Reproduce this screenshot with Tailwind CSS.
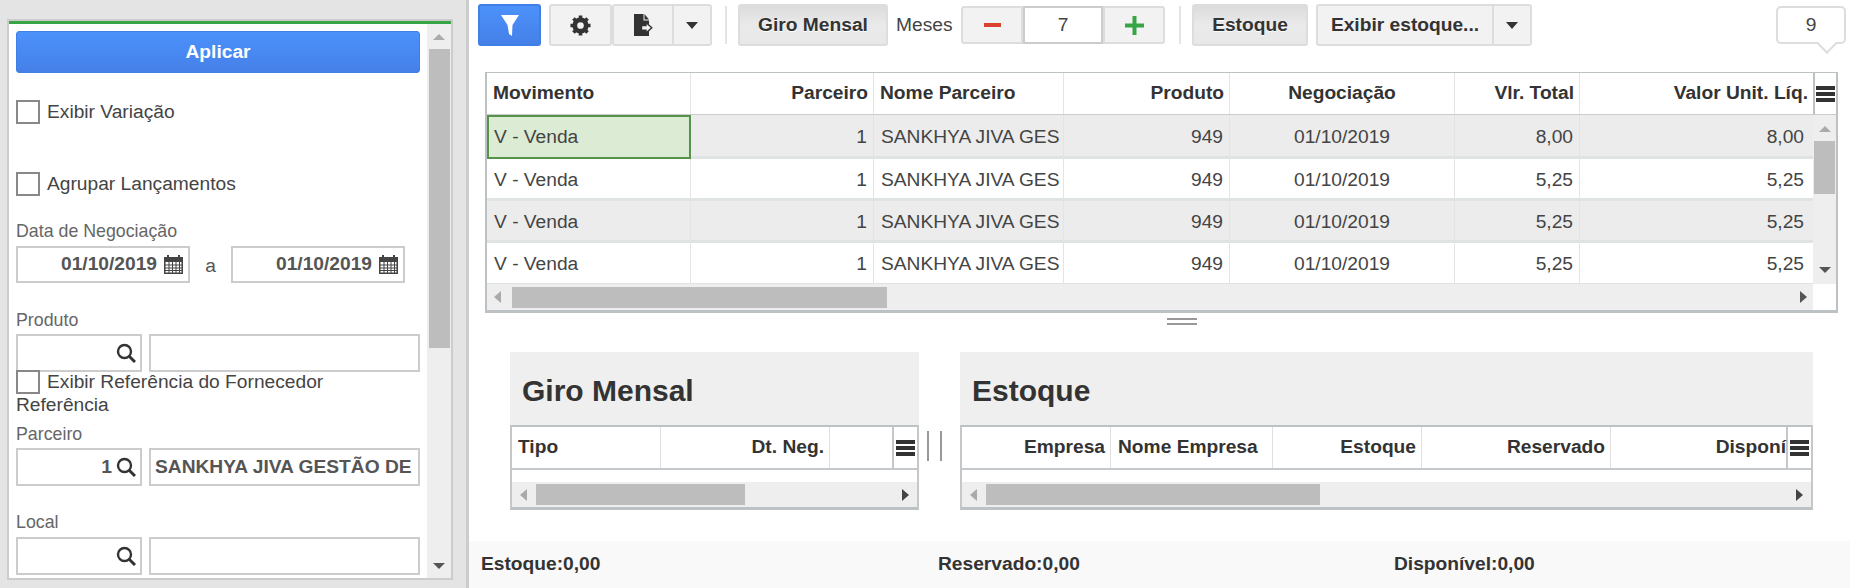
<!DOCTYPE html>
<html lang="pt-BR">
<head>
  <meta charset="UTF-8" />
  <title>Giro de Produtos</title>
  <script src="https://cdn.jsdelivr.net/npm/@tailwindcss/browser@4"></script>
</head>
<body class="w-[1850px] h-[588px] overflow-hidden flex bg-white text-[#333] text-[19.2px] font-['Liberation_Sans',sans-serif]">

  <!-- ===== FILTROS ===== -->
  <aside class="w-[469px] h-[588px] shrink-0 bg-[#e4e4e4] border-r-[3px] border-[#ccc] pt-[19px] pl-[7px]">
    <div class="w-[446px] h-[561px] border-2 border-[#ccc] bg-white flex flex-col">
      <div class="h-[3px] bg-[#37a546] shrink-0"></div>
      <div class="flex flex-1 min-h-0">
        <div class="w-[419px] h-full overflow-hidden pl-[7px] text-[#444]">
          <button class="block mt-[7px] w-[404px] h-[42px] rounded-[3px] border border-[#3f7fe6] bg-linear-to-b from-[#4c91fb] to-[#4580e8] text-white font-bold text-[19.2px]">Aplicar</button>

          <label class="flex items-center h-[24px] mt-[27px] gap-[7px]"><span class="w-[24px] h-[24px] border-2 border-[#888] bg-white"></span>Exibir Variação</label>
          <label class="flex items-center h-[24px] mt-[48px] gap-[7px]"><span class="w-[24px] h-[24px] border-2 border-[#888] bg-white"></span>Agrupar Lançamentos</label>

          <div class="mt-[25px] h-[21px] leading-[21px] text-[17.8px] text-[#666]">Data de Negociação</div>
          <div class="flex mt-[4px] items-center">
            <div class="w-[174px] h-[37px] border-2 border-[#ccc] flex items-center justify-end pr-[5px] gap-[7px] font-bold text-[#555]">01/10/2019
              <svg width="19" height="19" viewBox="0 0 19 19" fill="#444"><path d="M0 2h3V0h2v2h9V0h2v2h3v17H0zM1.500 7v10.500h16V7z"/><path d="M1 9.500h17v1H1zM1 12.500h17v1H1zM1 15h17v1H1zM4.500 7h1v11h-1zM8 7h1v11H8zM11.500 7h1v11h-1zM15 7h1v11h-1z"/></svg>
            </div>
            <span class="w-[41px] text-center text-[#555] pt-[3px]">a</span>
            <div class="w-[174px] h-[37px] border-2 border-[#ccc] flex items-center justify-end pr-[5px] gap-[7px] font-bold text-[#555]">01/10/2019
              <svg width="19" height="19" viewBox="0 0 19 19" fill="#444"><path d="M0 2h3V0h2v2h9V0h2v2h3v17H0zM1.500 7v10.500h16V7z"/><path d="M1 9.500h17v1H1zM1 12.500h17v1H1zM1 15h17v1H1zM4.500 7h1v11h-1zM8 7h1v11H8zM11.500 7h1v11h-1zM15 7h1v11h-1z"/></svg>
            </div>
          </div>

          <div class="mt-[27px] h-[21px] leading-[21px] text-[17.8px] text-[#666]">Produto</div>
          <div class="flex gap-[7px] mt-[3px]">
            <div class="w-[126px] h-[38px] border-2 border-[#ccc] flex items-center justify-end pr-[4px]">
              <svg width="20" height="20" viewBox="0 0 20 20" fill="none" stroke="#333" stroke-width="2.400"><circle cx="8.500" cy="8.500" r="6.500"/><path d="M13.200 13.200 19 19" stroke-width="3"/></svg>
            </div>
            <div class="w-[271px] h-[38px] border-2 border-[#ccc]"></div>
          </div>
          <label class="flex items-center h-[24px] -mt-[2px] gap-[7px]"><span class="w-[24px] h-[24px] border-2 border-[#888] bg-white"></span>Exibir Referência do Fornecedor</label>
          <div class="h-[22px] leading-[22px]">Referência</div>

          <div class="mt-[8px] h-[21px] leading-[21px] text-[17.8px] text-[#666]">Parceiro</div>
          <div class="flex gap-[7px] mt-[3px]">
            <div class="w-[126px] h-[38px] border-2 border-[#ccc] flex items-center justify-end pr-[4px] gap-[4px] font-bold text-[#555]">1
              <svg width="20" height="20" viewBox="0 0 20 20" fill="none" stroke="#333" stroke-width="2.400"><circle cx="8.500" cy="8.500" r="6.500"/><path d="M13.200 13.200 19 19" stroke-width="3"/></svg>
            </div>
            <div class="w-[271px] h-[38px] border-2 border-[#ccc] flex items-center pl-[4px] font-bold text-[#555] whitespace-nowrap">SANKHYA JIVA GESTÃO DE</div>
          </div>

          <div class="mt-[26px] h-[21px] leading-[21px] text-[17.8px] text-[#666]">Local</div>
          <div class="flex gap-[7px] mt-[4px]">
            <div class="w-[126px] h-[38px] border-2 border-[#ccc] flex items-center justify-end pr-[4px]">
              <svg width="20" height="20" viewBox="0 0 20 20" fill="none" stroke="#333" stroke-width="2.400"><circle cx="8.500" cy="8.500" r="6.500"/><path d="M13.200 13.200 19 19" stroke-width="3"/></svg>
            </div>
            <div class="w-[271px] h-[38px] border-2 border-[#ccc]"></div>
          </div>
        </div>

        <!-- scrollbar -->
        <div class="w-[24px] h-full bg-[#eee] flex flex-col items-center">
          <svg class="mt-[10px]" width="12" height="6" viewBox="0 0 12 6" fill="#aaa"><path d="M6 0 12 6H0z"/></svg>
          <div class="w-[21px] h-[299px] bg-[#bdbdbd] mt-[9px]"></div>
          <svg class="mt-[215px]" width="12" height="6" viewBox="0 0 12 6" fill="#555"><path d="M0 0h12L6 6z"/></svg>
        </div>
      </div>
    </div>
  </aside>

  <!-- ===== CONTEÚDO ===== -->
  <main class="flex-1 min-w-0 h-[588px] flex flex-col">

    <!-- toolbar -->
    <div class="h-[72px] shrink-0 flex items-start pt-[4px] pl-[9px] pr-[4px]">
      <button class="w-[63px] h-[42px] rounded-[3px] border-2 border-[#3f7fe6] bg-linear-to-b from-[#4c91fb] to-[#4580e8] flex items-center justify-center">
        <svg width="18" height="21" viewBox="0 0 18 21" fill="#fff"><path d="M0 0h18L11.500 10 11 21 8 19 6.500 10z"/></svg>
      </button>
      <button class="ml-[8px] w-[63px] h-[42px] rounded-[3px] border-2 border-[#ddd] bg-[#f2f2f2] flex items-center justify-center">
        <svg width="21" height="21" viewBox="0 0 22 22"><circle cx="11" cy="11" r="6" fill="none" stroke="#333" stroke-width="5"/><path d="M11 11V0.500M11 11v10.500M11 11H0.500M11 11h10.500M11 11 3.600 3.600M11 11l7.400 7.400M11 11l7.400-7.400M11 11l-7.400 7.400" stroke="#333" stroke-width="3.800" stroke-dasharray="0 7.300 3.200 20"/></svg>
      </button>
      <button class="w-[62px] h-[42px] rounded-l-[3px] border-2 border-[#ddd] bg-[#f2f2f2] flex items-center justify-center">
        <svg width="19" height="22" viewBox="0 0 19 22"><path d="M0 0h9.500v6.500H15V22H0z" fill="#333"/><path d="M10.500 0 15 5.500h-4.500z" fill="#333"/><path d="M7.500 11.500h4.500V8.500l5.800 5.300-5.800 5.300v-3H7.500z" fill="#f2f2f2" stroke="#333" stroke-width="1.400"/></svg>
      </button>
      <button class="w-[38px] h-[42px] rounded-r-[3px] border-2 border-l-0 border-[#ddd] bg-[#f2f2f2] flex items-center justify-center">
        <svg width="12" height="7" viewBox="0 0 12 7" fill="#333"><path d="M0 0h12L6 7z"/></svg>
      </button>
      <div class="ml-[13px] mt-[2px] w-[2px] h-[38px] bg-[#e4e4e4]"></div>
      <button class="ml-[11px] w-[150px] h-[42px] rounded-[3px] border-2 border-[#ddd] bg-linear-to-b from-[#dcdcdc] via-[#eaeaea] to-[#e8e8e8] font-bold text-[#333] text-shadow-[0_1px_0_#fff]">Giro Mensal</button>
      <span class="ml-[8px] w-[57px] h-[42px] leading-[42px] whitespace-nowrap text-[#444]">Meses</span>
      <div class="ml-[8px] mt-[2px] flex h-[38px]">
        <button class="w-[62px] h-[38px] rounded-l-[3px] border-2 border-[#ddd] bg-[#f2f2f2] flex items-center justify-center"><span class="block w-[17px] h-[4px] bg-[#d9432f]"></span></button>
        <div class="w-[80px] h-[38px] border-2 border-[#ccc] bg-white text-center leading-[34px] text-[#444]">7</div>
        <button class="w-[62px] h-[38px] rounded-r-[3px] border-2 border-[#ddd] bg-[#f2f2f2] flex items-center justify-center">
          <svg width="19" height="19" viewBox="0 0 19 19" fill="#37a546"><path d="M7.500 0h4v7.500H19v4h-7.500V19h-4v-7.500H0v-4h7.500z"/></svg>
        </button>
      </div>
      <div class="ml-[14px] mt-[2px] w-[2px] h-[38px] bg-[#e4e4e4]"></div>
      <button class="ml-[11px] w-[116px] h-[42px] rounded-[3px] border-2 border-[#ddd] bg-linear-to-b from-[#dcdcdc] via-[#eaeaea] to-[#e8e8e8] font-bold text-[#333] text-shadow-[0_1px_0_#fff]">Estoque</button>
      <button class="ml-[8px] w-[178px] h-[42px] rounded-l-[3px] border-2 border-[#ddd] bg-[#f2f2f2] font-bold text-[#333]">Exibir estoque...</button>
      <button class="w-[38px] h-[42px] rounded-r-[3px] border-2 border-l-0 border-[#ddd] bg-[#f2f2f2] flex items-center justify-center">
        <svg width="12" height="7" viewBox="0 0 12 7" fill="#333"><path d="M0 0h12L6 7z"/></svg>
      </button>
      <div class="relative ml-auto mt-[2px] w-[70px] h-[38px] rounded-[5px] border-2 border-[#ddd] bg-white text-center leading-[34px] text-[#444]">9
        <div class="absolute left-[42px] top-[29px] w-[14px] h-[14px] rotate-45 bg-white border-r-2 border-b-2 border-[#ddd]"></div>
      </div>
    </div>

    <!-- grade principal -->
    <div class="ml-[16px] w-[1353px] h-[241px] shrink-0 border-x-2 border-t-[1px] border-b-[3px] border-[#bcc2c4] flex">
      <div class="w-[1326px] shrink-0 flex flex-col">
        <div class="h-[42px] shrink-0 border-b border-[#ccc] grid grid-cols-[204px_183px_190px_166px_225px_125px_233px] font-bold text-[#333]">
          <div class="border-r border-[#e4e4e4] px-[6px] leading-[40px]">Movimento</div>
          <div class="border-r border-[#e4e4e4] px-[5px] leading-[40px] text-right">Parceiro</div>
          <div class="border-r border-[#e4e4e4] px-[6px] leading-[40px]">Nome Parceiro</div>
          <div class="border-r border-[#e4e4e4] px-[5px] leading-[40px] text-right">Produto</div>
          <div class="border-r border-[#e4e4e4] px-[5px] leading-[40px] text-center">Negociação</div>
          <div class="border-r border-[#e4e4e4] px-[5px] leading-[40px] text-right">Vlr. Total</div>
          <div class="px-[5px] leading-[40px] text-right whitespace-nowrap">Valor Unit. Líq.</div>
        </div>
        <div class="h-[44px] shrink-0 bg-[#ececec] border-b-[3px] border-[#dfe3e3] grid grid-cols-[204px_183px_190px_166px_225px_125px_233px] text-[#444]">
          <div class="bg-[#dcebd3] border-2 border-[#57924a] px-[5px] leading-[40px]">V - Venda</div>
          <div class="border-r border-[#e4e4e4] px-[6px] leading-[43px] text-right">1</div>
          <div class="border-r border-[#e4e4e4] pl-[7px] leading-[43px] whitespace-nowrap">SANKHYA JIVA GES</div>
          <div class="border-r border-[#e4e4e4] px-[6px] leading-[43px] text-right">949</div>
          <div class="border-r border-[#e4e4e4] px-[7px] leading-[43px] text-center">01/10/2019</div>
          <div class="border-r border-[#e4e4e4] px-[6px] leading-[43px] text-right">8,00</div>
          <div class="px-[9px] leading-[43px] text-right">8,00</div>
        </div>
        <div class="h-[42px] shrink-0 bg-white border-b-[3px] border-[#dfe3e3] grid grid-cols-[204px_183px_190px_166px_225px_125px_233px] text-[#444]">
          <div class="border-r border-[#e4e4e4] px-[7px] leading-[41px]">V - Venda</div>
          <div class="border-r border-[#e4e4e4] px-[6px] leading-[41px] text-right">1</div>
          <div class="border-r border-[#e4e4e4] pl-[7px] leading-[41px] whitespace-nowrap">SANKHYA JIVA GES</div>
          <div class="border-r border-[#e4e4e4] px-[6px] leading-[41px] text-right">949</div>
          <div class="border-r border-[#e4e4e4] px-[7px] leading-[41px] text-center">01/10/2019</div>
          <div class="border-r border-[#e4e4e4] px-[6px] leading-[41px] text-right">5,25</div>
          <div class="px-[9px] leading-[41px] text-right">5,25</div>
        </div>
        <div class="h-[42px] shrink-0 bg-[#ececec] border-b-[3px] border-[#dfe3e3] grid grid-cols-[204px_183px_190px_166px_225px_125px_233px] text-[#444]">
          <div class="border-r border-[#e4e4e4] px-[7px] leading-[41px]">V - Venda</div>
          <div class="border-r border-[#e4e4e4] px-[6px] leading-[41px] text-right">1</div>
          <div class="border-r border-[#e4e4e4] pl-[7px] leading-[41px] whitespace-nowrap">SANKHYA JIVA GES</div>
          <div class="border-r border-[#e4e4e4] px-[6px] leading-[41px] text-right">949</div>
          <div class="border-r border-[#e4e4e4] px-[7px] leading-[41px] text-center">01/10/2019</div>
          <div class="border-r border-[#e4e4e4] px-[6px] leading-[41px] text-right">5,25</div>
          <div class="px-[9px] leading-[41px] text-right">5,25</div>
        </div>
        <div class="h-[41px] shrink-0 bg-white border-b border-[#dfe3e3] grid grid-cols-[204px_183px_190px_166px_225px_125px_233px] text-[#444]">
          <div class="border-r border-[#e4e4e4] px-[7px] leading-[41px]">V - Venda</div>
          <div class="border-r border-[#e4e4e4] px-[6px] leading-[41px] text-right">1</div>
          <div class="border-r border-[#e4e4e4] pl-[7px] leading-[41px] whitespace-nowrap">SANKHYA JIVA GES</div>
          <div class="border-r border-[#e4e4e4] px-[6px] leading-[41px] text-right">949</div>
          <div class="border-r border-[#e4e4e4] px-[7px] leading-[41px] text-center">01/10/2019</div>
          <div class="border-r border-[#e4e4e4] px-[6px] leading-[41px] text-right">5,25</div>
          <div class="px-[9px] leading-[41px] text-right">5,25</div>
        </div>
        <div class="flex-1 bg-[#eee] flex items-center pl-[7px] pr-[6px]">
          <svg width="7" height="12" viewBox="0 0 7 12" fill="#aaa"><path d="M7 0v12L0 6z"/></svg>
          <div class="ml-[11px] w-[375px] h-[21px] bg-[#bdbdbd]"></div>
          <svg class="ml-auto" width="7" height="12" viewBox="0 0 7 12" fill="#555"><path d="M0 0v12l7-6z"/></svg>
        </div>
      </div>
      <div class="flex-1 flex flex-col">
        <div class="h-[42px] border-l-2 border-[#bcc2c4] border-b border-b-[#ccc] flex items-center justify-center">
          <svg width="19" height="16" viewBox="0 0 19 16" fill="#333"><path d="M0 0h19v4H0zM0 6h19v4H0zM0 12h19v4H0z"/></svg>
        </div>
        <div class="h-[169px] bg-[#eee] flex flex-col items-center">
          <svg class="mt-[11px]" width="12" height="6" viewBox="0 0 12 6" fill="#aaa"><path d="M6 0 12 6H0z"/></svg>
          <div class="w-[21px] h-[53px] bg-[#bdbdbd] mt-[9px]"></div>
          <svg class="mt-[73px]" width="12" height="6" viewBox="0 0 12 6" fill="#555"><path d="M0 0h12L6 6z"/></svg>
        </div>
      </div>
    </div>

    <!-- divisor -->
    <div class="h-[39px] shrink-0 pt-[5px] pl-[698px]">
      <div class="w-[30px] h-[7px] border-y-2 border-[#999]"></div>
    </div>

    <!-- paineis inferiores -->
    <div class="flex items-start pl-[41px]">
      <section class="w-[409px] shrink-0">
        <h2 class="h-[73px] bg-[#efefef] pl-[12px] pt-[19px] text-[30px] leading-[40px] font-bold text-[#333]">Giro Mensal</h2>
        <div class="h-[85px] border-x-2 border-t-2 border-b-[3px] border-[#c4c8ca] border-t-[#bcc2c4] border-b-[#bcc2c4] flex flex-col">
          <div class="h-[43px] shrink-0 border-b-2 border-[#c4c8ca] flex font-bold text-[#333]">
            <div class="w-[149px] border-r border-[#e0e0e0] pl-[6px] leading-[40px]">Tipo</div>
            <div class="w-[169px] border-r border-[#e0e0e0] pr-[5px] leading-[40px] text-right">Dt. Neg.</div>
            <div class="w-[64px] border-r-2 border-[#c4c8ca]"></div>
            <div class="flex-1 flex items-center justify-center">
              <svg width="19" height="16" viewBox="0 0 19 16" fill="#333"><path d="M0 0h19v4H0zM0 6h19v4H0zM0 12h19v4H0z"/></svg>
            </div>
          </div>
          <div class="h-[12px] shrink-0"></div>
          <div class="flex-1 bg-[#eee] flex items-center pl-[8px] pr-[8px]">
            <svg width="7" height="12" viewBox="0 0 7 12" fill="#aaa"><path d="M7 0v12L0 6z"/></svg>
            <div class="ml-[9px] w-[209px] h-[21px] bg-[#bdbdbd]"></div>
            <svg class="ml-auto" width="7" height="12" viewBox="0 0 7 12" fill="#444"><path d="M0 0v12l7-6z"/></svg>
          </div>
        </div>
      </section>

      <div class="ml-[8px] mt-[79px] h-[30px] w-[15px] border-x-2 border-[#999] shrink-0"></div>

      <section class="ml-[18px] w-[853px] shrink-0">
        <h2 class="h-[73px] bg-[#efefef] pl-[12px] pt-[19px] text-[30px] leading-[40px] font-bold text-[#333]">Estoque</h2>
        <div class="h-[85px] border-x-2 border-t-2 border-b-[3px] border-[#c4c8ca] border-t-[#bcc2c4] border-b-[#bcc2c4] flex flex-col">
          <div class="h-[43px] shrink-0 border-b-2 border-[#c4c8ca] flex font-bold text-[#333]">
            <div class="w-[149px] border-r border-[#e0e0e0] pr-[5px] leading-[40px] text-right">Empresa</div>
            <div class="w-[162px] border-r border-[#e0e0e0] pl-[7px] leading-[40px]">Nome Empresa</div>
            <div class="w-[149px] border-r border-[#e0e0e0] pr-[5px] leading-[40px] text-right">Estoque</div>
            <div class="w-[189px] border-r border-[#e0e0e0] pr-[5px] leading-[40px] text-right">Reservado</div>
            <div class="w-[177px] border-r-2 border-[#c4c8ca] leading-[40px] whitespace-nowrap text-right">Disponí</div>
            <div class="flex-1 flex items-center justify-center">
              <svg width="19" height="16" viewBox="0 0 19 16" fill="#333"><path d="M0 0h19v4H0zM0 6h19v4H0zM0 12h19v4H0z"/></svg>
            </div>
          </div>
          <div class="h-[12px] shrink-0"></div>
          <div class="flex-1 bg-[#eee] flex items-center pl-[8px] pr-[8px]">
            <svg width="7" height="12" viewBox="0 0 7 12" fill="#aaa"><path d="M7 0v12L0 6z"/></svg>
            <div class="ml-[9px] w-[334px] h-[21px] bg-[#bdbdbd]"></div>
            <svg class="ml-auto" width="7" height="12" viewBox="0 0 7 12" fill="#444"><path d="M0 0v12l7-6z"/></svg>
          </div>
        </div>
      </section>
    </div>

    <!-- totais -->
    <div class="mt-auto h-[47px] shrink-0 bg-[#f9f9f9] flex items-center pl-[12px] font-bold text-[#333]">
      <span class="w-[457px]">Estoque:0,00</span>
      <span class="w-[456px]">Reservado:0,00</span>
      <span>Disponível:0,00</span>
    </div>
  </main>
</body>
</html>
